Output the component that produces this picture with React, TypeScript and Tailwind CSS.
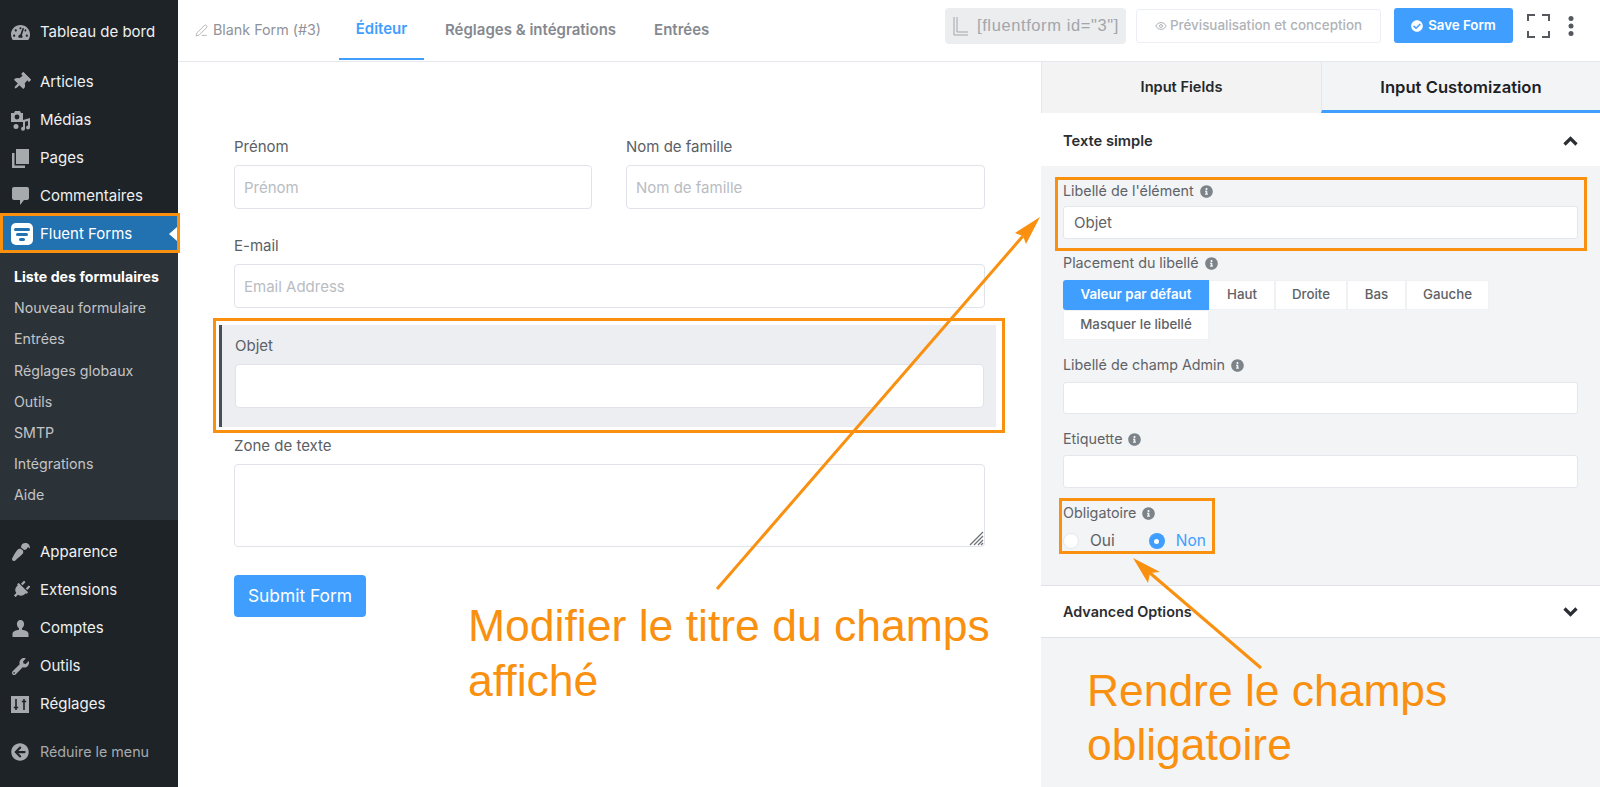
import { ReactNode } from "react";
import {
  FaTachometerAlt,
  FaThumbtack,
  FaPaintBrush,
  FaPlug,
  FaWrench,
  FaCheckCircle,
  FaInfoCircle,
  FaArrowCircleLeft,
} from "react-icons/fa";
import { Eye, PenLine } from "lucide-react";

const font = "font-['Inter','Liberation_Sans',sans-serif]";

function MediaIcon() {
  return (
    <svg width="21" height="21" viewBox="0 0 21 21" fill="currentColor">
      <path d="M1 3h3l1-2h5l1 2h2v9H1z" />
      <circle cx="7" cy="7" r="2.4" fill="#1d2327" />
      <path d="M13 10l7-2v9.5a2 2 0 1 1-2-2V11l-3 .8v7a2 2 0 1 1-2-2z" />
      <circle cx="6" cy="16.5" r="2.5" />
    </svg>
  );
}

function PagesIcon() {
  return (
    <svg width="19" height="21" viewBox="0 0 19 21" fill="currentColor">
      <path d="M5 1h13v15H5z" />
      <path d="M1 5h2.5v12.5H14V20H1z" />
    </svg>
  );
}

function CommentIcon() {
  return (
    <svg width="19" height="20" viewBox="0 0 19 20" fill="currentColor">
      <path d="M3 1h13a2 2 0 0 1 2 2v9a2 2 0 0 1-2 2h-3l-4 5v-5H3a2 2 0 0 1-2-2V3a2 2 0 0 1 2-2z" />
    </svg>
  );
}

function UserIcon() {
  return (
    <svg width="19" height="19" viewBox="0 0 19 19" fill="currentColor">
      <path d="M9.5 1c2.2 0 3.6 1.7 3.6 4 0 1.900-.9 3.500-2.100 4.300v1.500c2.800.5 6.500 1.600 6.500 3.900V18H1.500v-3.300c0-2.300 3.700-3.400 6.500-3.900V9.300C6.800 8.500 5.900 6.900 5.900 5c0-2.300 1.400-4 3.600-4z" />
    </svg>
  );
}

function SlidersIcon() {
  return (
    <svg width="19" height="19" viewBox="0 0 19 19">
      <rect width="18" height="17" y="1" fill="currentColor" />
      <path d="M5 4v11M2.800 12.500h4.400M13 4v11M10.800 6.500h4.400" stroke="#1d2327" strokeWidth="1.600" />
    </svg>
  );
}

function FluentLogo() {
  return (
    <span className="flex h-[22px] w-[22px] items-center justify-center rounded-[5px] bg-white">
      <svg width="16" height="13" viewBox="0 0 16 13" fill="#2271b1">
        <rect x="0" y="0" width="16" height="3" rx="1.500" />
        <rect x="2" y="5" width="12" height="3" rx="1.500" />
        <rect x="5" y="10" width="6" height="3" rx="1.500" />
      </svg>
    </span>
  );
}

function Chevron({ up }: { up?: boolean }) {
  return (
    <svg width="15" height="10" viewBox="0 0 15 10" fill="none" stroke="#2b2e33" strokeWidth="3.200">
      <path d={up ? "M1.500 8.500L7.500 2.500L13.500 8.500" : "M1.500 1.500L7.500 7.500L13.500 1.500"} />
    </svg>
  );
}

function MenuItem({ icon, label }: { icon: ReactNode; label: string }) {
  return (
    <div className="flex h-[38px] items-center pt-[2px]">
      <span className="flex w-[40px] justify-center pl-[1px] text-[#a7aaad]">{icon}</span>
      <span className="text-[15px] text-[#f0f0f1]">{label}</span>
    </div>
  );
}

function Info() {
  return <FaInfoCircle size={13} className="text-[#7d8489]" />;
}

function PanelLabel({ text }: { text: string }) {
  return (
    <div className="flex h-5 items-center gap-[6px] text-[14.3px] text-[#5f6368]">
      {text}
      <Info />
    </div>
  );
}

function PanelInput({ value, className }: { value?: string; className: string }) {
  return (
    <input
      readOnly
      value={value ?? ""}
      className={`block w-full rounded-[3px] border border-[#e4e7ed] bg-white px-[10px] text-[15px] text-[#606266] ${className}`}
    />
  );
}

function FormLabel({ text }: { text: string }) {
  return <div className="flex h-5 items-center text-[15px] text-[#5b6065]">{text}</div>;
}

function FormInput({ placeholder }: { placeholder?: string }) {
  return (
    <input
      readOnly
      placeholder={placeholder}
      className="mt-[8px] block h-[44px] w-full rounded-[4px] border border-[#e0e3e9] bg-white px-[9px] text-[15px] placeholder:text-[#b9bcc2]"
    />
  );
}

const placements = [
  { label: "Valeur par défaut", w: "w-[146px]" },
  { label: "Haut", w: "w-[66px]" },
  { label: "Droite", w: "w-[72px]" },
  { label: "Bas", w: "w-[59px]" },
  { label: "Gauche", w: "w-[83px]" },
  { label: "Masquer le libellé", w: "w-[146px]" },
];

export default function App() {
  return (
    <div className={`relative flex h-[787px] w-[1600px] overflow-hidden bg-white ${font}`}>
      {/* Sidebar */}
      <aside className="w-[178px] shrink-0 bg-[#1d2327] pt-[12px]">
        <MenuItem icon={<FaTachometerAlt size={19} />} label="Tableau de bord" />
        <div className="mt-[12px]">
          <MenuItem icon={<FaThumbtack size={18} className="rotate-[45deg]" />} label="Articles" />
          <MenuItem icon={<MediaIcon />} label="Médias" />
          <MenuItem icon={<PagesIcon />} label="Pages" />
          <MenuItem icon={<CommentIcon />} label="Commentaires" />
        </div>
        <div className="relative z-10 -mb-[1px] -mr-[2px] -mt-[1px] flex h-[40px] items-center border-[3px] border-[#f9900f] bg-[#2271b1] pt-[2px]">
          <span className="flex w-[37px] justify-center">
            <FluentLogo />
          </span>
          <span className="text-[15px] text-white">Fluent Forms</span>
          <span className="absolute right-0 h-0 w-0 border-y-[7px] border-r-[8px] border-y-transparent border-r-white" />
        </div>
        <div className="h-[268px] bg-[#2c3338] pt-[9px] text-[14.2px] text-[#c3c4c7]">
          <div className="flex h-[31.2px] items-center pl-[14px] font-bold text-white">Liste des formulaires</div>
          {["Nouveau formulaire", "Entrées", "Réglages globaux", "Outils", "SMTP", "Intégrations", "Aide"].map((s) => (
            <div key={s} className="flex h-[31.2px] items-center pl-[14px]">
              {s}
            </div>
          ))}
        </div>
        <div className="mt-[12px]">
          <MenuItem icon={<FaPaintBrush size={18} className="rotate-180" />} label="Apparence" />
          <MenuItem icon={<FaPlug size={18} className="rotate-[45deg]" />} label="Extensions" />
          <MenuItem icon={<UserIcon />} label="Comptes" />
          <MenuItem icon={<FaWrench size={17} />} label="Outils" />
          <MenuItem icon={<SlidersIcon />} label="Réglages" />
        </div>
        <div className="mt-[11px] flex h-[38px] items-center">
          <span className="flex w-[40px] justify-center text-[#a7aaad]">
            <FaArrowCircleLeft size={18} />
          </span>
          <span className="text-[14.3px] text-[#a7aaad]">Réduire le menu</span>
        </div>
      </aside>

      <div className="flex min-w-0 flex-1 flex-col">
        {/* Top bar */}
        <header className="flex h-[62px] shrink-0 items-center border-b border-[#e4e7ed] pl-[17px] pb-[1px]">
          <div className="flex w-[144px] items-center gap-[5px] text-[14.3px] text-[#8f9399]">
            <PenLine size={13} strokeWidth={1.2} />
            Blank Form (#3)
          </div>
          <div className="flex h-full w-[85px] items-center justify-center border-b-[2px] border-[#409eff] pt-[1px] text-[15px] font-semibold text-[#409eff]">
            Éditeur
          </div>
          <div className="ml-[21px] text-[15px] font-semibold text-[#85898f]">Réglages &amp; intégrations</div>
          <div className="ml-[38px] text-[15px] font-semibold text-[#85898f]">Entrées</div>
          <div className="ml-auto flex items-center pb-[9px] pr-[26px]">
            <div className="flex h-[36px] w-[181px] items-center gap-[8px] rounded-[4px] bg-[#ebedef] px-[8px] font-['Liberation_Sans',sans-serif] text-[16.5px] tracking-[0.6px] text-[#a3a6ab]">
              <svg className="shrink-0" width="16" height="20" viewBox="0 0 16 20" fill="none" stroke="#a3a6ab" strokeWidth="1">
                <path d="M1 1v18h14M4 1v15h11" />
              </svg>
              <span className="whitespace-nowrap">[fluentform id="3"]</span>
            </div>
            <div className="ml-[10px] flex h-[34px] w-[245px] items-center justify-center gap-[3px] rounded-[3px] border border-[#ebeef5] text-[13.4px] font-medium text-[#b0b3b8]">
              <Eye size={12} />
              Prévisualisation et conception
            </div>
            <div className="ml-[13px] flex h-[35px] w-[119px] items-center justify-center gap-[5px] rounded-[3px] bg-[#409eff] text-[13.3px] font-semibold text-white">
              <FaCheckCircle size={12} />
              Save Form
            </div>
            <svg className="ml-[14px]" width="23" height="24" viewBox="0 0 23 24" fill="none" stroke="#55595e" strokeWidth="2">
              <path d="M1 7V1h7M15 1h7v6M1 17v6h7M15 23h7v-6" />
            </svg>
            <svg className="ml-[18px]" width="6" height="20" viewBox="0 0 6 20" fill="#55595e">
              <circle cx="3" cy="2.500" r="2.500" />
              <circle cx="3" cy="10" r="2.500" />
              <circle cx="3" cy="17.500" r="2.500" />
            </svg>
          </div>
        </header>

        <div className="flex min-h-0 flex-1">
          {/* Form preview */}
          <main className="w-[863px] shrink-0 pl-[56px] pt-[75px]">
            <div className="w-[751px]">
              <div className="flex gap-[34px]">
                <div className="w-[358px]">
                  <FormLabel text="Prénom" />
                  <FormInput placeholder="Prénom" />
                </div>
                <div className="w-[359px]">
                  <FormLabel text="Nom de famille" />
                  <FormInput placeholder="Nom de famille" />
                </div>
              </div>
              <div className="mt-[27px]">
                <FormLabel text="E-mail" />
                <FormInput placeholder="Email Address" />
              </div>
              <div className="ml-[-21px] mr-[-20px] mt-[10px] border-[3px] border-[#f9900f] pb-[3px] pl-[3px] pr-[6px] pt-[4px]">
                <div className="border-l-[3px] border-[#4a4f57] bg-[#eceef2] pb-[19px] pl-[13px] pr-[12px] pt-[11px]">
                  <FormLabel text="Objet" />
                  <FormInput />
                </div>
              </div>
              <div className="mt-[3px]">
                <FormLabel text="Zone de texte" />
                <div className="relative">
                  <textarea
                    readOnly
                    className="mt-[8px] block h-[83px] w-full resize-none rounded-[4px] border border-[#e0e3e9] bg-white"
                  />
                  <svg className="absolute bottom-[1px] right-[1px]" width="15" height="15" viewBox="0 0 15 15" stroke="#6f7378" strokeWidth="1.300">
                    <path d="M1 14L14 1M5 14L14 5M9 14L14 9M12 14L14 12" />
                  </svg>
                </div>
              </div>
              <button className="mt-[28px] h-[42px] w-[132px] rounded-[4px] bg-[#409eff] text-[17.4px] text-white">
                Submit Form
              </button>
            </div>
          </main>

          {/* Settings panel */}
          <section className="flex min-w-0 flex-1 flex-col bg-[#f3f4f6]">
            <div className="flex h-[51px] shrink-0">
              <div className="flex w-[280px] items-center justify-center border-l border-[#e4e7ed] bg-[#f3f3f4] pt-[1px] text-[14.6px] font-semibold text-[#26292c]">
                Input Fields
              </div>
              <div className="flex flex-1 items-center justify-center border-b-[3px] border-l border-[#409eff] border-l-[#e4e7ed] pt-[3px] text-[16.6px] font-semibold text-[#1f2225]">
                Input Customization
              </div>
            </div>
            <div className="flex h-[53px] shrink-0 items-center justify-between bg-white px-[22px] pt-[3px]">
              <span className="text-[14.7px] font-semibold text-[#2b2e33]">Texte simple</span>
              <Chevron up />
            </div>
            <div className="px-[22px] pt-[11px]">
              <div className="ml-[-8px] mr-[-9px] border-[3px] border-[#f9900f] pb-[9px] pl-[5px] pr-[6px] pt-[1px]">
                <PanelLabel text="Libellé de l'élément" />
                <PanelInput value="Objet" className="mt-[5px] h-[33px]" />
              </div>
              <div className="mt-[2px]">
                <PanelLabel text="Placement du libellé" />
              </div>
              <div className="mt-[7px] flex w-[430px] flex-wrap">
                {placements.map((p, i) => (
                  <div
                    key={p.label}
                    className={`flex h-[30px] items-center justify-center text-[13.3px] font-medium ${p.w} ${
                      i === 0
                        ? "rounded-l-[3px] bg-[#409eff] font-semibold text-white"
                        : "border border-[#eff1f5] bg-white text-[#606266]"
                    }`}
                  >
                    {p.label}
                  </div>
                ))}
              </div>
              <div className="mt-[15px]">
                <PanelLabel text="Libellé de champ Admin" />
              </div>
              <PanelInput className="mt-[7px] h-[32px]" />
              <div className="mt-[15px]">
                <PanelLabel text="Etiquette" />
              </div>
              <PanelInput className="mt-[6px] h-[33px]" />
              <div className="ml-[-4px] mt-[10px] h-[56px] w-[156px] border-[3px] border-[#f9900f] pl-[1px] pt-[2px]">
                <PanelLabel text="Obligatoire" />
                <div className="mt-[8px] flex h-5 items-center text-[15.5px]">
                  <span className="h-[16px] w-[16px] rounded-full border border-[#e4e7ed] bg-white" />
                  <span className="ml-[11px] text-[#5b6065]">Oui</span>
                  <span className="ml-[34px] flex h-[16px] w-[16px] items-center justify-center rounded-full bg-[#409eff]">
                    <span className="h-[5px] w-[5px] rounded-full bg-white" />
                  </span>
                  <span className="ml-[11px] text-[#409eff]">Non</span>
                </div>
              </div>
            </div>
            <div className="mt-[31px] flex h-[53px] shrink-0 items-center justify-between border-y border-[#e0e2e5] bg-white px-[22px]">
              <span className="text-[14.4px] font-semibold text-[#2b2e33]">Advanced Options</span>
              <Chevron />
            </div>
          </section>
        </div>
      </div>

      {/* Annotations */}
      <svg className="pointer-events-none absolute inset-0" width="1600" height="787" fill="#f9900f" stroke="none">
        <path d="M717 589L1023 236" stroke="#f9900f" strokeWidth="3" fill="none" />
        <path d="M1040 217L1015 233L1023 236L1026 244Z" />
        <path d="M1261 668L1150 573" stroke="#f9900f" strokeWidth="3" fill="none" />
        <path d="M1133 558L1160 572L1150 573L1148 583Z" />
      </svg>
      <div className="absolute left-[468px] top-[598px] w-[560px] font-['Liberation_Sans',sans-serif] text-[44.5px] leading-[55px] text-[#f9900f]">
        Modifier le titre du champs
        <br />
        affiché
      </div>
      <div className="absolute left-[1087px] top-[664px] font-['Liberation_Sans',sans-serif] text-[44.4px] leading-[54px] text-[#f9900f]">
        Rendre le champs
        <br />
        obligatoire
      </div>
    </div>
  );
}
